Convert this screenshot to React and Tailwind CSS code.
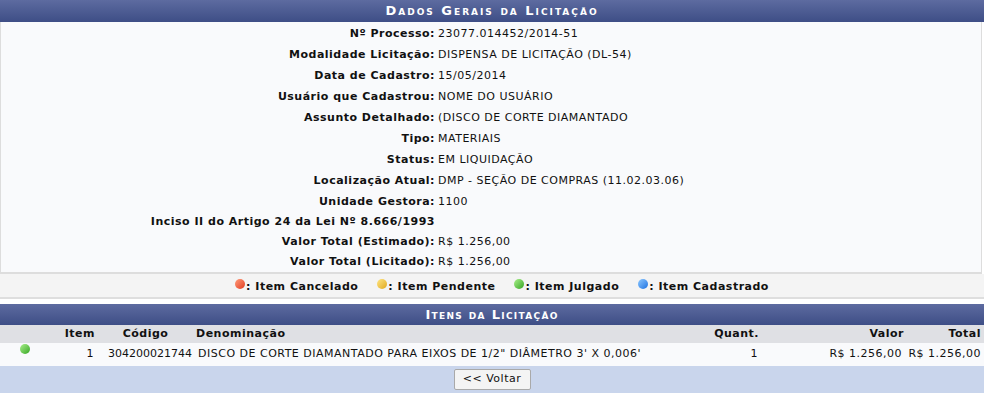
import React from "react";

const dados = [
  ["Nº Processo:", "23077.014452/2014-51"],
  ["Modalidade Licitação:", "DISPENSA DE LICITAÇÃO (DL-54)"],
  ["Data de Cadastro:", "15/05/2014"],
  ["Usuário que Cadastrou:", "NOME DO USUÁRIO"],
  ["Assunto Detalhado:", "(DISCO DE CORTE DIAMANTADO"],
  ["Tipo:", "MATERIAIS"],
  ["Status:", "EM LIQUIDAÇÃO"],
  ["Localização Atual:", "DMP - SEÇÃO DE COMPRAS (11.02.03.06)"],
  ["Unidade Gestora:", "1100"],
];

const totais = [
  ["Valor Total (Estimado):", "R$ 1.256,00", "h-[21px]"],
  ["Valor Total (Licitado):", "R$ 1.256,00", "h-[19px]"],
];

const legenda = [
  { cor: "from-[#ff9a7a] to-[#e0361a]", texto: "Item Cancelado" },
  { cor: "from-[#ffe680] to-[#e0a800]", texto: "Item Pendente" },
  { cor: "from-[#a8f08a] to-[#2ea61a]", texto: "Item Julgado" },
  { cor: "from-[#8cc8ff] to-[#1470e0]", texto: "Item Cadastrado" },
];

function Bolinha({ cor }) {
  return <span className={`inline-block w-[10px] h-[10px] rounded-full bg-gradient-to-br ${cor} relative -top-[3px]`} />;
}

function Cabecalho({ children, className = "" }) {
  return (
    <div className={`flex items-center justify-center bg-gradient-to-b from-[#5d6ba0] to-[#3e4e86] text-white font-bold text-[13px] [font-variant:small-caps] ${className}`}>
      {children}
    </div>
  );
}

export default function App() {
  return (
    <div className="w-[984px] bg-white text-[11px] tracking-[0.5px] text-[#111] font-['DejaVu_Sans','Verdana',sans-serif]">
      <Cabecalho className="h-[22px] tracking-[2px]">Dados Gerais da Licitação</Cabecalho>

      <div className="bg-[#f9fafc] border-x border-b-2 border-[#dddddd] mr-[2px] pt-[2px]">
        <table className="w-full border-collapse">
          <tbody>
            {dados.map(([rotulo, valor]) => (
              <tr key={rotulo} className="h-[21px]">
                <th className="w-[437px] text-right font-bold pr-[3px]">{rotulo}</th>
                <td>{valor}</td>
              </tr>
            ))}
            <tr className="h-[19px]">
              <th className="text-right font-bold pr-[3px]">Inciso II do Artigo 24 da Lei Nº 8.666/1993</th>
              <td />
            </tr>
            {totais.map(([rotulo, valor, h]) => (
              <tr key={rotulo} className={h}>
                <th className="text-right font-bold pr-[3px]">{rotulo}</th>
                <td>{valor}</td>
              </tr>
            ))}
          </tbody>
        </table>
      </div>

      <div className="h-[25px] pt-[3px] bg-[#f4f4f4] border-b-2 border-[#dedede] flex items-center justify-center gap-[19px] font-bold pl-[20px]">
        {legenda.map((l) => (
          <span key={l.texto} className="flex items-center gap-[1px]">
            <Bolinha cor={l.cor} />
            <span>: {l.texto}</span>
          </span>
        ))}
      </div>

      <div className="h-[5px]" />
      <Cabecalho className="h-[21px] tracking-[1.3px]">Itens da Licitação</Cabecalho>

      <table className="w-full border-collapse">
        <thead>
          <tr className="h-[18px] bg-[#dfe0e4] font-bold">
            <th className="w-[40px]" />
            <th className="w-[57px] text-right pr-[2px]">Item</th>
            <th className="w-[97px] text-center">Código</th>
            <th className="text-left pl-[2px]">Denominação</th>
            <th className="w-[80px] text-right pr-[2px]">Quant.</th>
            <th className="w-[145px] text-right pr-[2px]">Valor</th>
            <th className="w-[78px] text-right pr-[3px]">Total</th>
          </tr>
        </thead>
        <tbody>
          <tr className="h-[23px] bg-[#f9fafc]">
            <td className="pl-[20px]">
              <Bolinha cor="from-[#a8f08a] to-[#2ea61a]" />
            </td>
            <td className="text-right pr-[3px]">1</td>
            <td className="pl-[11px] tracking-normal">304200021744</td>
            <td className="pl-[4px]">DISCO DE CORTE DIAMANTADO PARA EIXOS DE 1/2" DIÂMETRO 3' X 0,006'</td>
            <td className="text-right pr-[3px]">1</td>
            <td className="text-right pr-[4px]">R$ 1.256,00</td>
            <td className="text-right pr-[3px]">R$ 1.256,00</td>
          </tr>
        </tbody>
      </table>

      <div className="h-[27px] bg-[#c9d5ec] flex items-center justify-center">
        <button className="h-[21px] w-[77px] bg-[#f4f4f4] border border-[#a9a9a9] rounded-[2px] text-[11px] text-[#111]">
          &lt;&lt; Voltar
        </button>
      </div>
    </div>
  );
}
